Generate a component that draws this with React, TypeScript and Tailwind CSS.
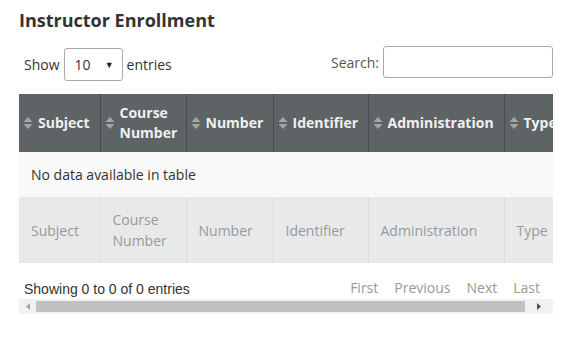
import React from "react"

const columnas = [
  { nombre: "Subject", w: 81 },
  { nombre: "Course Number", w: 86 },
  { nombre: "Number", w: 87 },
  { nombre: "Identifier", w: 95 },
  { nombre: "Administration", w: 136 },
  { nombre: "Type", w: 80 },
]

function SortIcon() {
  return (
    <svg width="10" height="14" viewBox="0 0 10 14" className="shrink-0">
      <path d="M5 1 L9.5 6 L0.5 6 Z" fill="#a3a6a8" />
      <path d="M5 13 L9.5 8 L0.5 8 Z" fill="#a3a6a8" />
    </svg>
  )
}

export default function App() {
  return (
    <div className="w-[576px] h-[339px] bg-white pl-[19px] pt-[7px] text-[14px] text-[#333] font-['Open_Sans',sans-serif]">
      <div className="w-[534px]">
        <h2 className="text-[18px] font-bold leading-[26px] text-[#333]">Instructor Enrollment</h2>

        <div className="flex justify-between mt-[13px] h-[45px]">
          <div className="flex items-center self-end mb-[10px] pl-[5px]">
            <span>Show</span>
            <div className="mx-[4px] w-[59px] h-[33px] border border-[#aaa] rounded-[3px] flex items-center justify-between pl-[10px] pr-[8px]">
              <span>10</span>
              <span className="text-[9px] text-[#222]">▼</span>
            </div>
            <span>entries</span>
          </div>
          <div className="flex items-center self-start">
            <span className="mr-[4px] text-[#555]">Search:</span>
            <div className="w-[170px] h-[32px] border border-[#aaa] rounded-[3px]" />
          </div>
        </div>

        <div className="w-[534px] overflow-hidden mt-[3px]">
          <table className="table-fixed border-collapse w-[565px]">
            <colgroup>
              {columnas.map((c) => (
                <col key={c.nombre} style={{ width: c.w }} />
              ))}
            </colgroup>
            <thead>
              <tr className="bg-[#5e6366] h-[58px]">
                {columnas.map((c, i) => (
                  <th
                    key={c.nombre}
                    className={`text-left font-bold text-[#eef0f1] leading-[20px] pl-[4px] pr-[2px] ${i > 0 ? "border-l border-[#484c4e]" : ""}`}
                  >
                    <div className="flex items-center gap-[5px] whitespace-nowrap">
                      <SortIcon />
                      {c.nombre === "Course Number" ? (
                        <span className="text-left">Course<br />Number</span>
                      ) : (
                        <span>{c.nombre}</span>
                      )}
                    </div>
                  </th>
                ))}
              </tr>
            </thead>
            <tbody>
              <tr className="bg-[#f9f9f9] h-[45px]">
                <td colSpan={6} className="pl-[12px]">No data available in table</td>
              </tr>
            </tbody>
            <tfoot>
              <tr className="bg-[#e8e9ea] h-[66px] text-[#999]">
                {columnas.map((c, i) => (
                  <td
                    key={c.nombre}
                    className={`pl-[12px] leading-[21px] ${i > 0 ? "border-l border-[#dcdcdc]" : ""}`}
                  >
                    {c.nombre === "Course Number" ? (
                      <span>Course<br />Number</span>
                    ) : (
                      c.nombre
                    )}
                  </td>
                ))}
              </tr>
            </tfoot>
          </table>
        </div>

        <div className="flex justify-between items-end mt-[15px] h-[19px]">
          <span className="pl-[5px] font-['Liberation_Sans',Arial,sans-serif] text-[14px] leading-[16px] text-[#333]">
            Showing 0 to 0 of 0 entries
          </span>
          <div className="flex gap-[16px] text-[#999] pr-[13px] leading-[19px]">
            <span>First</span>
            <span>Previous</span>
            <span>Next</span>
            <span>Last</span>
          </div>
        </div>

        <div className="w-[534px] h-[15px] bg-[#f1f1f1] flex items-center mt-[2px]">
          <div className="w-[17px] flex justify-center">
            <svg width="4" height="7" viewBox="0 0 4 7">
              <path d="M4 0 L0 3.5 L4 7 Z" fill="#a3a3a3" />
            </svg>
          </div>
          <div className="w-[489px] h-[11px] bg-[#c1c1c1]" />
          <div className="flex-1 flex justify-center">
            <svg width="4" height="7" viewBox="0 0 4 7">
              <path d="M0 0 L4 3.5 L0 7 Z" fill="#505050" />
            </svg>
          </div>
        </div>
      </div>
    </div>
  )
}
